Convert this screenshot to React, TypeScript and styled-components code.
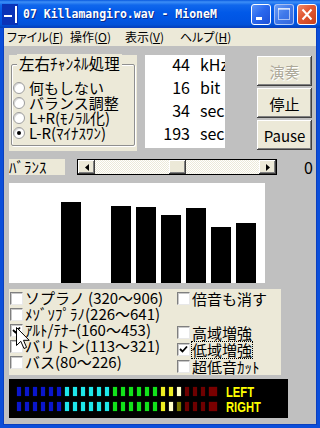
import React from "react";
import styled, { createGlobalStyle, css } from "styled-components";

const JP = `"Noto Sans CJK JP", "Noto Sans", sans-serif`;
const BEIGE = "#ECE9D8";

const Global = createGlobalStyle`
  html, body { margin: 0; padding: 0; background: #fff; }
  body { font-family: ${JP}; color: #000; }
  #root { width: 320px; height: 428px; }
`;

const bevel = css`
  background: ${BEIGE};
  box-shadow: inset -1px -1px #404040, inset 1px 1px #fff, inset -2px -2px #808080;
`;

const Window = styled.div`
  width: 320px;
  height: 428px;
  display: flex;
  flex-direction: column;
  overflow: hidden;
  background: #0B4ED9;
`;

const TitleBar = styled.div`
  height: 28px;
  flex: none;
  display: flex;
  align-items: center;
  padding: 0 3px 0 2px;
  box-sizing: border-box;
  background: linear-gradient(
    to bottom,
    #0858de 0%,
    #3d8ff7 7%,
    #1067ec 18%,
    #0159e8 45%,
    #0055e4 70%,
    #0251d8 88%,
    #003db8 100%
  );
`;

const TitleIcon = styled.div`
  width: 16px;
  height: 22px;
  flex: none;
  display: flex;
`;

const TitleText = styled.div`
  margin-left: 5px;
  flex: 1;
  color: #fff;
  font-family: "DejaVu Sans Mono", "Liberation Mono", monospace;
  font-weight: bold;
  font-size: 11.5px;
  letter-spacing: 0;
  white-space: nowrap;
  text-shadow: 1px 1px 0 #0a2a8a;
`;

const CaptionButtons = styled.div`
  display: flex;
  gap: 3px;
`;

const CaptionButton = styled.div<{ $kind: "min" | "max" | "close" }>`
  width: 20px;
  height: 21px;
  box-sizing: border-box;
  border-radius: 3px;
  border: 1px solid ${(p) => (p.$kind === "max" ? "rgba(255,255,255,0.55)" : "#fff")};
  display: flex;
  align-items: center;
  justify-content: center;
  background: ${(p) =>
    p.$kind === "close"
      ? "linear-gradient(135deg, #f08a6a 0%, #e25a36 40%, #c8401a 100%)"
      : p.$kind === "max"
      ? "linear-gradient(135deg, #6a9cf5 0%, #3f78ea 50%, #3266dc 100%)"
      : "linear-gradient(135deg, #5a94f8 0%, #2a68ee 45%, #1d50d6 100%)"};
`;

const Frame = styled.div`
  flex: 1;
  display: flex;
  flex-direction: column;
  margin: 0 4px 4px;
  box-shadow: 0 0 0 1px #0a3fbf;
`;

const MenuBar = styled.div`
  height: 18px;
  flex: none;
  background: ${BEIGE};
  display: flex;
  align-items: center;
  padding-left: 3px;
  font-size: 12px;
  line-height: 18px;
  font-feature-settings: "palt";
`;

const MenuItem = styled.span<{ $w: number }>`
  width: ${(p) => p.$w}px;
  white-space: nowrap;
  u { text-decoration: underline; text-underline-offset: 1px; }
`;

const Client = styled.div`
  flex: 1;
  background: #c0c0c0;
  padding: 9px 0 0 5px;
  display: flex;
  flex-direction: column;
`;

const TopRow = styled.div`
  display: flex;
  align-items: flex-start;
  height: 96px;
`;

const GroupBox = styled.div`
  width: 128px;
  height: 96px;
  box-sizing: border-box;
  background: ${BEIGE};
  padding: 9px 2px 5px 2px;
  flex: none;
`;

const GroupFrame = styled.div`
  position: relative;
  height: 100%;
  box-sizing: border-box;
  border: 1px solid #8f8f8f;
  border-radius: 2px;
  box-shadow: 1px 1px 0 #fff, inset 1px 1px 0 #fff;
  padding: 15px 0 0 1px;
`;

const Legend = styled.span`
  position: absolute;
  top: -11px;
  left: 5px;
  padding: 0 2px;
  background: ${BEIGE};
  font-size: 15.5px;
  line-height: 18px;
  white-space: nowrap;
`;

const RadioRow = styled.div`
  display: flex;
  align-items: center;
  height: 15px;
  font-size: 15px;
  line-height: 15px;
  white-space: nowrap;
`;

const Radio = styled.span<{ $on?: boolean }>`
  width: 12px;
  height: 12px;
  box-sizing: border-box;
  border-radius: 50%;
  border: 1px solid #9c9c9c;
  background: #fff;
  box-shadow: inset 1px 1px 0 #d8d8d8;
  margin-right: 4px;
  flex: none;
  display: flex;
  align-items: center;
  justify-content: center;
  &::after {
    content: "";
    width: 4px;
    height: 4px;
    border-radius: 50%;
    background: ${(p) => (p.$on ? "#000" : "transparent")};
  }
`;

const InfoBox = styled.div`
  margin-left: 8px;
  width: 80px;
  height: 93px;
  background: #fff;
  overflow: hidden;
  display: grid;
  grid-template-columns: 45px 1fr;
  grid-auto-rows: 23px;
  column-gap: 10px;
  align-items: start;
  font-size: 16px;
  line-height: 18px;
  flex: none;
`;

const InfoNum = styled.span`
  text-align: right;
`;

const InfoUnit = styled.span`
  white-space: nowrap;
`;

const ButtonColumn = styled.div`
  margin-left: 32px;
  width: 55px;
  padding-top: 1px;
  display: flex;
  flex-direction: column;
  gap: 2px;
`;

const PushButton = styled.div<{ $disabled?: boolean }>`
  height: 30px;
  ${bevel};
  display: flex;
  align-items: center;
  justify-content: center;
  font-size: 15px;
  color: ${(p) => (p.$disabled ? "#aca899" : "#000")};
  text-shadow: ${(p) => (p.$disabled ? "1px 1px 0 #fff" : "none")};
`;

const BalanceRow = styled.div`
  margin-top: 8px;
  height: 16px;
  display: flex;
  align-items: center;
`;

const BalanceLabel = styled.div`
  width: 56px;
  height: 16px;
  background: ${BEIGE};
  font-size: 15px;
  line-height: 16px;
  white-space: nowrap;
  flex: none;
`;

const Slider = styled.div`
  margin-left: 12px;
  width: 200px;
  height: 16px;
  box-sizing: border-box;
  border: 1px solid #000;
  display: flex;
  background: repeating-conic-gradient(#fff 0 25%, ${BEIGE} 0 50%) 0 0 / 2px 2px;
  flex: none;
`;

const ArrowBtn = styled.div`
  width: 17px;
  height: 100%;
  flex: none;
  ${bevel};
  display: flex;
  align-items: center;
  justify-content: center;
`;

const Track = styled.div`
  flex: 1;
  position: relative;
`;

const Thumb = styled.div`
  position: absolute;
  top: 0;
  bottom: 0;
  width: 17px;
  ${bevel};
`;

const BalanceValue = styled.div`
  margin-left: auto;
  padding-right: 3px;
  font-size: 16px;
  line-height: 16px;
`;

const Chart = styled.div`
  margin-top: 8px;
  width: 256px;
  height: 100px;
  background: #fff;
  display: flex;
  align-items: flex-end;
  gap: 5px;
  padding-left: 2px;
  box-sizing: border-box;
  flex: none;
`;

const Bar = styled.div`
  width: 20px;
  background: #000;
  flex: none;
`;

const CheckPanel = styled.div`
  position: relative;
  margin-top: 6px;
  width: 272px;
  height: 86px;
  background: ${BEIGE};
  display: grid;
  grid-template-columns: 167px 1fr;
  padding: 1px 0 0 1px;
  box-sizing: border-box;
  flex: none;
`;

const CheckColumn = styled.div`
  display: flex;
  flex-direction: column;
`;

const CheckRow = styled.div<{ $h: number }>`
  display: flex;
  align-items: center;
  height: ${(p) => p.$h}px;
  gap: 2px;
  font-size: 15px;
  line-height: 16px;
  white-space: nowrap;
`;

const Spacer = styled.div<{ $h: number }>`
  height: ${(p) => p.$h}px;
`;

const Box = styled.span`
  width: 13px;
  height: 13px;
  box-sizing: border-box;
  background: #fff;
  border: 1px solid;
  border-color: #7f7f7f #e8e8e8 #e8e8e8 #7f7f7f;
  box-shadow: inset 1px 1px 0 #c8c8c8;
  flex: none;
  display: flex;
  align-items: center;
  justify-content: center;
`;

const CheckLabel = styled.span<{ $focus?: boolean }>`
  outline: ${(p) => (p.$focus ? "1px dotted #000" : "none")};
  outline-offset: 0px;
`;

const Cursor = styled.svg`
  position: absolute;
  left: 7px;
  top: 38px;
`;

const Meter = styled.div`
  margin-top: 4px;
  width: 279px;
  height: 39px;
  background: #000;
  padding: 8px 0 0 8px;
  box-sizing: border-box;
  display: flex;
  flex-direction: column;
  gap: 6px;
  flex: none;
`;

const MeterRow = styled.div`
  height: 9px;
  display: flex;
  align-items: center;
`;

const Segments = styled.div`
  display: flex;
  gap: 4px;
  height: 9px;
`;

const Segment = styled.span<{ $c: string; $w: number }>`
  width: ${(p) => p.$w}px;
  height: 9px;
  background: ${(p) => p.$c};
  box-shadow: 0 0 1px ${(p) => p.$c};
`;

const MeterLabel = styled.span`
  margin-left: 9px;
  display: inline-block;
  color: #ffff00;
  font-family: "Liberation Sans", Arial, sans-serif;
  font-weight: bold;
  font-size: 14px;
  line-height: 12px;
  transform: scaleX(0.8);
  transform-origin: left center;
`;

const COLORS: Record<string, string> = {
  B: "#0a16cc",
  C: "#1ee6ea",
  G: "#12e21a",
  Y: "#eeee22",
  P: "#ffffc8",
  O: "#7a7a00",
  R: "#6e0000",
  W: "#7a0000",
};

const meters = [
  { label: "LEFT", pattern: "BBBBBBCCCCCCGGGGGGYYPRRRW" },
  { label: "RIGHT", pattern: "BBBBBBCCCCCCGGGGGGYPORRRW" },
];

const bars = [0, 0, 81, 0, 77, 76, 68, 75, 56, 60];

const leftChecks = [
  { t: "ソプラノ (320～906)", on: false },
  { t: "ﾒｿﾞｿﾌﾟﾗﾉ(226～641)", on: false },
  { t: "ｱﾙﾄ/ﾃﾅｰ(160～453)", on: true },
  { t: "バリトン(113～321)", on: false },
  { t: "バス(80～226)", on: false },
];

const rightChecks = [
  { t: "高域増強", on: false, focus: false },
  { t: "低域増強", on: true, focus: true },
  { t: "超低音ｶｯﾄ", on: false, focus: false },
];

const CheckMark = () => (
  <svg width="9" height="9" viewBox="0 0 9 9">
    <path d="M1 4 L3.5 6.5 L8 1.5" fill="none" stroke="#000" strokeWidth="1.8" />
  </svg>
);

const Check = ({ on }: { on: boolean }) => <Box>{on ? <CheckMark /> : null}</Box>;

const balance = 0;

export default function App() {
  return (
    <Window>
      <Global />
      <TitleBar>
        <TitleIcon>
          <svg width="16" height="22" viewBox="0 0 16 22">
            <rect x="0" y="1" width="16" height="21" fill="#0a33b8" />
            <rect x="2" y="12" width="8" height="2" fill="#fff" />
            <rect x="13" y="3" width="2" height="17" fill="#fff" />
          </svg>
        </TitleIcon>
        <TitleText>07 Killamangiro.wav - MioneM</TitleText>
        <CaptionButtons>
          <CaptionButton $kind="min">
            <svg width="18" height="19" viewBox="0 0 18 19">
              <rect x="4" y="12" width="6" height="3" fill="#fff" />
            </svg>
          </CaptionButton>
          <CaptionButton $kind="max">
            <svg width="18" height="19" viewBox="0 0 18 19">
              <rect x="3.5" y="3.5" width="11" height="11" fill="none" stroke="rgba(255,255,255,0.55)" />
              <rect x="3" y="3" width="12" height="2" fill="rgba(255,255,255,0.55)" />
            </svg>
          </CaptionButton>
          <CaptionButton $kind="close">
            <svg width="18" height="19" viewBox="0 0 18 19">
              <path d="M4.5 4.5 L13.5 14.5 M13.5 4.5 L4.5 14.5" stroke="#fff" strokeWidth="2" />
            </svg>
          </CaptionButton>
        </CaptionButtons>
      </TitleBar>
      <Frame>
        <MenuBar>
          <MenuItem $w={63}>ファイル(<u>F</u>)</MenuItem>
          <MenuItem $w={55}>操作(<u>O</u>)</MenuItem>
          <MenuItem $w={55}>表示(<u>V</u>)</MenuItem>
          <MenuItem $w={60}>ヘルプ(<u>H</u>)</MenuItem>
        </MenuBar>
        <Client>
          <TopRow>
            <GroupBox>
              <GroupFrame>
                <Legend>左右ﾁｬﾝﾈﾙ処理</Legend>
                <RadioRow><Radio />何もしない</RadioRow>
                <RadioRow><Radio />バランス調整</RadioRow>
                <RadioRow><Radio />L+R(ﾓﾉﾗﾙ化)</RadioRow>
                <RadioRow><Radio $on />L-R(ﾏｲﾅｽﾜﾝ)</RadioRow>
              </GroupFrame>
            </GroupBox>
            <InfoBox>
              <InfoNum>44</InfoNum><InfoUnit>kHz</InfoUnit>
              <InfoNum>16</InfoNum><InfoUnit>bit</InfoUnit>
              <InfoNum>34</InfoNum><InfoUnit>sec</InfoUnit>
              <InfoNum>193</InfoNum><InfoUnit>sec</InfoUnit>
            </InfoBox>
            <ButtonColumn>
              <PushButton $disabled>演奏</PushButton>
              <PushButton>停止</PushButton>
              <PushButton>Pause</PushButton>
            </ButtonColumn>
          </TopRow>
          <BalanceRow>
            <BalanceLabel>ﾊﾞﾗﾝｽ</BalanceLabel>
            <Slider>
              <ArrowBtn>
                <svg width="4" height="7" viewBox="0 0 4 7"><path d="M4 0 L0 3.5 L4 7 Z" fill="#000" /></svg>
              </ArrowBtn>
              <Track>
                <Thumb style={{ left: `calc((100% - 17px) * ${(balance + 100) / 200})` }} />
              </Track>
              <ArrowBtn>
                <svg width="4" height="7" viewBox="0 0 4 7"><path d="M0 0 L4 3.5 L0 7 Z" fill="#000" /></svg>
              </ArrowBtn>
            </Slider>
            <BalanceValue>{balance}</BalanceValue>
          </BalanceRow>
          <Chart>
            {bars.map((h, i) => (
              <Bar key={i} style={{ height: `${h}px` }} />
            ))}
          </Chart>
          <CheckPanel>
            <CheckColumn>
              {leftChecks.map((c, i) => (
                <CheckRow key={i} $h={16}>
                  <Check on={c.on} />
                  <CheckLabel>{c.t}</CheckLabel>
                </CheckRow>
              ))}
            </CheckColumn>
            <CheckColumn>
              <CheckRow $h={17}>
                <Check on={false} />
                <CheckLabel>倍音も消す</CheckLabel>
              </CheckRow>
              <Spacer $h={17} />
              {rightChecks.map((c, i) => (
                <CheckRow key={i} $h={17}>
                  <Check on={c.on} />
                  <CheckLabel $focus={c.focus}>{c.t}</CheckLabel>
                </CheckRow>
              ))}
            </CheckColumn>
            <Cursor width="14" height="23" viewBox="0 0 14 23">
              <path
                d="M0.5 0.5 L0.5 18.5 L4.8 14.3 L8 21.5 L10.6 20.4 L7.5 13.3 L13.2 13.3 Z"
                fill="#fff"
                stroke="#000"
                strokeWidth="1"
              />
            </Cursor>
          </CheckPanel>
          <Meter>
            {meters.map((m) => (
              <MeterRow key={m.label}>
                <Segments>
                  {m.pattern.split("").map((k, i) => (
                    <Segment key={i} $c={COLORS[k]} $w={k === "W" ? 8 : 4} />
                  ))}
                </Segments>
                <MeterLabel>{m.label}</MeterLabel>
              </MeterRow>
            ))}
          </Meter>
        </Client>
      </Frame>
    </Window>
  );
}
